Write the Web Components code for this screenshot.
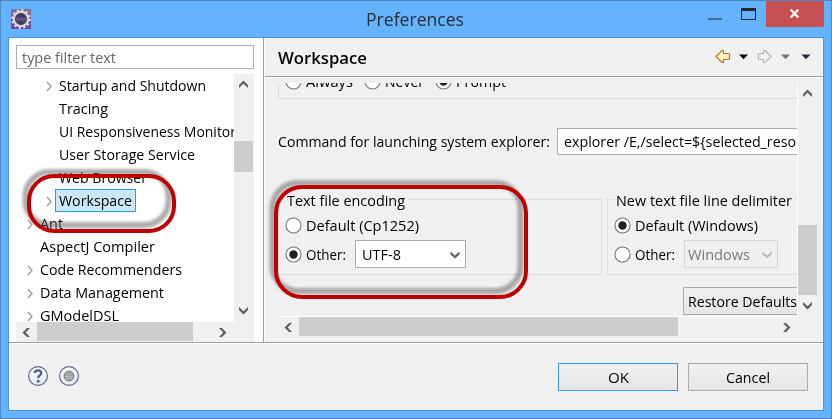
<!DOCTYPE html>
<html lang="en">
<head>
<meta charset="utf-8">
<title>Preferences</title>
<style>
  html, body { margin: 0; height: 100%; overflow: hidden; }
  body { font: 15px/20px "Open Sans", "Noto Sans", sans-serif; color: #000; }
</style>
</head>
<body>
<prefs-window></prefs-window>
<script>
const define = (name, html, setup) => {
  const t = document.createElement('template');
  t.innerHTML = html;
  customElements.define(name, class extends HTMLElement {
    constructor() {
      super();
      this.attachShadow({ mode: 'open' }).append(t.content.cloneNode(true));
    }
    connectedCallback() { if (setup) setup(this, this.shadowRoot); }
  });
};

/* One line of text, condensed or widened to the width in its "w" attribute. */
define('fit-text', `
  <style>
    :host { display: inline-block; white-space: nowrap; flex: none; }
    span { display: inline-block; transform-origin: 0 50%; }
  </style><span><slot></slot></span>`, (el, root) => {
  const s = root.querySelector('span');
  const w = +el.getAttribute('w');
  const natural = s.getBoundingClientRect().width;
  el.style.width = w + 'px';
  if (natural) s.style.transform = `scaleX(${w / natural})`;
});

/* Scroll bar: "dir" v or h, --before and --thumb give the thumb's place. */
define('scroll-bar', `
  <style>
    :host { display: flex; background: #f0f0f0; box-sizing: border-box; }
    :host([dir=v]) { flex-direction: column; width: 20px; }
    :host([dir=h]) { height: 20px; }
    svg { flex: none; width: 20px; height: 20px; fill: #606060; }
    i { background: #cdcdcd; margin-right: 1px; margin-top: var(--before); height: var(--thumb); }
    :host([dir=h]) i { margin: 0 0 1px var(--before); width: var(--thumb); height: auto; }
    b { flex: 1; }
    :host([dir=h]) .a { transform: rotate(-90deg); }
    :host([dir=v]) .z { transform: rotate(180deg); }
    :host([dir=h]) .z { transform: rotate(90deg); }
  </style>
  <svg class="a" viewBox="0 0 20 20"><path d="M9.500 6.500L14 11V14L9.500 9.700L5 14V11Z"/></svg>
  <i></i><b></b>
  <svg class="z" viewBox="0 0 20 20"><path d="M10.500 6.500L15 11V14L10.500 9.700L6 14V11Z"/></svg>`);

define('tree-item', `
  <style>
    :host { display: flex; align-items: center; height: 23px; padding-left: 8px; }
    :host([level="2"]) { padding-left: 27px; }
    svg { width: 12px; height: 12px; flex: none; visibility: hidden; fill: none; stroke: #9a9a9a; stroke-width: 1.3; }
    :host([branch]) svg { visibility: visible; }
    div { box-sizing: border-box; height: 23px; border: 1px solid transparent; padding: 0 3px 0 3px; line-height: 20px; }
    :host([selected]) div { background: #cbe8f6; border-color: #26a0da; }
  </style>
  <svg viewBox="0 0 12 12"><path d="M4 2L8 6.500L4 11"/></svg>
  <div><slot></slot></div>`);

define('radio-option', `
  <style>
    :host { display: flex; align-items: center; gap: 4px; height: 20px; }
    svg { width: 17px; height: 17px; flex: none; }
    circle { fill: #fff; stroke: #767676; stroke-width: 1.1; }
    .dot { fill: none; stroke: none; }
    :host([checked]) .dot { fill: #212121; }
  </style>
  <svg viewBox="0 0 17 17"><circle cx="8.500" cy="8.500" r="7.500"/><circle class="dot" cx="8.500" cy="8.500" r="4.200"/></svg>
  <slot></slot>`);

define('combo-box', `
  <style>
    :host { display: flex; box-sizing: border-box; height: 28px; border: 1px solid #abadb3; background: #fff; align-items: center; justify-content: space-between; padding: 0 5px 1px 6px; }
    :host([disabled]) { border-color: #d4d4d4; background: #efefef; color: #787878; padding-left: 3px; }
    svg { width: 10px; height: 10px; fill: #606060; margin-top: 2px; }
    :host([disabled]) svg { fill: #bcbcbc; }
  </style>
  <slot></slot><svg viewBox="0 0 10 10"><path d="M.500 1.500L5 5.500L9.500 1.500V4.500L5 8.500L.500 4.500Z"/></svg>`);

define('group-box', `
  <style>
    :host { display: block; box-sizing: border-box; height: 76px; border: 1px solid #dcdcdc; }
    header { width: max-content; height: 20px; margin: -10px 0 0 6px; background: #f0f0f0; padding: 0 3px 0 2px; }
    section { padding-left: 6px; display: grid; grid-template-rows: 20px 28px; row-gap: 5px; padding-top: 5px; }
  </style>
  <header><slot name="legend"></slot></header><section><slot></slot></section>`);

define('option-row', `
  <style>:host { display: flex; align-items: center; gap: 9px; }</style><slot></slot>`);

define('push-button', `
  <style>
    :host { display: flex; align-items: center; justify-content: center; box-sizing: border-box; width: 120px; height: 28px; flex: none;
      border: 1px solid #acacac; background: linear-gradient(#f0f0f0, #e5e5e5); }
    :host([primary]) { border-color: #3399ff; }
  </style><slot></slot>`);

/* Red marker outline with a soft grey shadow to its upper left. */
define('marker-ring', `
  <style>
    :host { position: absolute; box-sizing: border-box; pointer-events: none; border-radius: 27px; }
    i, b { position: absolute; inset: 0; border-radius: inherit; box-sizing: border-box; }
    i { border: 6px solid rgba(95,95,95,.52); transform: translate(-4.500px, -5px); filter: blur(1.500px); }
    b { border: 4.500px solid #c00000; }
  </style><i></i><b></b>`);

define('title-bar', `
  <style>
    :host { display: flex; height: 36px; position: relative; }
    .app { width: 20px; height: 20px; margin: 8px 0 0 10px; }
    .name { flex: 1; color: #2b2f36; font-size: 18px; line-height: 24px; padding: 6px 0 0 335px; }
    .btns { height: 30px; width: 141px; }
  </style>
  <svg class="app" viewBox="0 0 20 20">
    <defs><linearGradient id="g" x2="0" y2="1"><stop stop-color="#8a7193"/><stop offset="1" stop-color="#64489b"/></linearGradient>
    <linearGradient id="h" x2="0" y2="1"><stop stop-color="#332b44"/><stop offset=".5" stop-color="#51497c"/><stop offset=".6" stop-color="#4b4468"/><stop offset="1" stop-color="#39314d"/></linearGradient></defs>
    <rect width="20" height="20" fill="url(#g)"/>
    <circle cx="10" cy="10" r="8.700" fill="none" stroke="#e5e0db" stroke-width="2.200" stroke-dasharray="2.300 2.255"/>
    <circle cx="10" cy="10" r="7.200" fill="url(#h)" stroke="#dcd7d3" stroke-width="2.200"/>
    <path d="M5 9.500H15M5 11H15" stroke="#766e97" stroke-width=".6"/>
  </svg>
  <div class="name"><fit-text w="98">Preferences</fit-text></div>
  <svg class="btns" viewBox="0 0 141 30">
    <rect x="18" y="17" width="14" height="2" fill="#496d91"/>
    <rect x="51.500" y="7.500" width="14" height="11" fill="none" stroke="#25272b"/><rect x="51" y="7" width="15" height="3" fill="#25272b"/>
    <rect x="76" y="0" width="58" height="26" fill="#c75050"/>
    <path d="M100.700 8.500L108.300 16.500M108.300 8.500L100.700 16.500" stroke="#fff" stroke-width="2.300"/>
  </svg>`);

define('filter-tree', `
  <style>
    :host { display: flex; flex-direction: column; background: #fff; width: 255px; box-sizing: border-box; padding: 7px 9px 0 7px; border-right: 1px solid #a0a0a0; height: 304px; }
    .filter { box-sizing: border-box; width: 238px; height: 24px; border: 1px solid #abadb3; color: #666; padding: 1px 5px; flex: none; }
    .grid { display: grid; grid-template: 248px 20px / 218px 20px; margin-top: 5px; }
    .rows { overflow: hidden; }
    .v { --before: 47px; --thumb: 31px; padding-bottom: 1px; }
    .h { --before: 1px; --thumb: 156px; padding-right: 1px; }
    .corner { background: #f0f0f0; }
  </style>
  <div class="filter"><fit-text w="94">type filter text</fit-text></div>
  <div class="grid">
    <div class="rows">
      <tree-item level="2" branch><fit-text w="147">Startup and Shutdown</fit-text></tree-item>
      <tree-item level="2"><fit-text w="49">Tracing</fit-text></tree-item>
      <tree-item level="2"><fit-text w="177">UI Responsiveness Monitor</fit-text></tree-item>
      <tree-item level="2"><fit-text w="136">User Storage Service</fit-text></tree-item>
      <tree-item level="2"><fit-text w="88">Web Browser</fit-text></tree-item>
      <tree-item level="2" branch selected><fit-text w="73">Workspace</fit-text></tree-item>
      <tree-item branch><fit-text w="23">Ant</fit-text></tree-item>
      <tree-item><fit-text w="115">AspectJ Compiler</fit-text></tree-item>
      <tree-item branch><fit-text w="142">Code Recommenders</fit-text></tree-item>
      <tree-item branch><fit-text w="124">Data Management</fit-text></tree-item>
      <tree-item branch><fit-text w="79">GModelDSL</fit-text></tree-item>
    </div>
    <scroll-bar dir="v" class="v"></scroll-bar>
    <scroll-bar dir="h" class="h"></scroll-bar>
    <div class="corner"></div>
  </div>`);

define('page-header', `
  <style>
    :host { display: flex; box-sizing: border-box; height: 39px; border-bottom: 1px solid #a0a0a0; box-shadow: 0 1px #fff; padding: 10px 11px 0 13px; justify-content: space-between; }
    .t { font-weight: 600; font-size: 16px; }
    svg { width: 98px; height: 20px; }
  </style>
  <div class="t"><fit-text w="89">Workspace</fit-text></div>
  <svg viewBox="0 0 98 20">
    <defs><linearGradient id="y" x2="0" y2="1"><stop stop-color="#fffdf0"/><stop offset="1" stop-color="#ffe394"/></linearGradient></defs>
    <path d="M2 8.500L8 2.500H9.500V5.500H14.500Q15.500 5.500 15.500 6.500V10.500Q15.500 11.500 14.500 11.500H9.500V14.500H8L2 8.500Z" fill="url(#y)" stroke="#b7791c" stroke-width="1.200"/>
    <path d="M25 6.500H34L29.500 11.300Z"/>
    <path d="M57 8.500L51 2.500H49.500V5.500H45Q44.500 5.500 44.500 6.500V10.500Q44.500 11.500 45 11.500H49.500V14.500H51L57 8.500Z" fill="#f3f3f3" stroke="#b3b3b3" stroke-width="1.200"/>
    <path d="M67 6.500H76L71.500 11.300Z" fill="#77777b"/>
    <path d="M87.500 6.500H96.500L92 11.300Z" fill="#2e2344"/>
  </svg>`);

define('page-form', `
  <style>
    :host { display: grid; grid-template: 233px 20px / 520px 20px; padding: 6px 0 0 13px; }
    .view { overflow: hidden; box-sizing: border-box; border-right: 1px solid #fff; border-bottom: 1px solid #fff; height: 234px; width: 520px; }
    .inner { width: 640px; }
    .prompt { height: 16px; box-sizing: border-box; border: solid #dcdcdc; border-width: 0 0 1px 1px; display: flex; align-items: flex-end; padding: 0 0 7px 6px; overflow: visible; }
    .prompt radio-option { margin-right: 11px; }
    .cmd { display: flex; align-items: center; margin-top: 30px; gap: 7px; height: 27px; }
    .cmd > fit-text { margin-top: -1px; }
    .input { width: 320px; height: 27px; box-sizing: border-box; border: 1px solid #abadb3; background: #fff; padding: 2px 6px; }
    .groups { display: flex; gap: 5px; margin-top: 44px; }
    .l { width: 324px; } .r { width: 260px; }
    .one { width: 111px; } .two { width: 94px; }
    .restore { display: flex; margin: 12px 0 0 405px; }
    .restore push-button { width: 125px; justify-content: flex-start; box-sizing: border-box; padding-left: 4px; }
    .prompt + .cmd { margin-top: 29px; }
    .v { --before: 122px; --thumb: 70px; width: 20px; height: 233px; }
    .h { --before: 1px; --thumb: 379px; margin: 1px 1px 0 0; }
  </style>
  <div class="view"><div class="inner">
    <div class="prompt">
      <radio-option><fit-text w="47">Always</fit-text></radio-option>
      <radio-option><fit-text w="39">Never</fit-text></radio-option>
      <radio-option checked><fit-text w="50">Prompt</fit-text></radio-option>
    </div>
    <div class="cmd"><fit-text w="272">Command for launching system explorer:</fit-text><div class="input"><fit-text w="232">explorer /E,/select=\${selected_reso</fit-text></div></div>
    <div class="groups">
      <group-box class="l">
        <fit-text slot="legend" w="118">Text file encoding</fit-text>
        <radio-option><fit-text w="113">Default (Cp1252)</fit-text></radio-option>
        <option-row><radio-option checked><fit-text w="40">Other:</fit-text></radio-option><combo-box class="one"><fit-text w="39">UTF-8</fit-text></combo-box></option-row>
      </group-box>
      <group-box class="r">
        <fit-text slot="legend" w="176">New text file line delimiter</fit-text>
        <radio-option checked><fit-text w="123">Default (Windows)</fit-text></radio-option>
        <option-row><radio-option><fit-text w="40">Other:</fit-text></radio-option><combo-box disabled class="two"><fit-text w="62">Windows</fit-text></combo-box></option-row>
      </group-box>
    </div>
    <div class="restore"><push-button><fit-text w="109">Restore Defaults</fit-text></push-button></div>
  </div></div>
  <scroll-bar dir="v" class="v"></scroll-bar>
  <scroll-bar dir="h" class="h"></scroll-bar>`);

define('button-bar', `
  <style>
    :host { display: flex; box-sizing: border-box; height: 68px; border-top: 1px solid #a0a0a0; box-shadow: inset 0 1px #fff; padding: 20px 15px 0 18px; gap: 10px; }
    svg { width: 54px; height: 24px; margin: 1px auto 0 0; }
  </style>
  <svg viewBox="0 0 54 24">
    <defs><linearGradient id="b" x2="0" y2="1"><stop stop-color="#fff"/><stop offset="1" stop-color="#e3e8f0"/></linearGradient></defs>
    <circle cx="11" cy="12" r="9.400" fill="url(#b)" stroke="#596b8f" stroke-width="1.200"/>
    <path d="M7.700 9Q7.700 6.300 11 6.300Q14.300 6.300 14.300 9Q14.300 10.400 12.700 11.500Q11.200 12.500 11.200 14.300" fill="none" stroke="#4d608a" stroke-width="2.200"/><rect x="9.900" y="16" width="2.600" height="2.500" fill="#4d608a"/>
    <circle cx="42" cy="12" r="9.400" fill="url(#b)" stroke="#596b8f" stroke-width="1.200"/>
    <circle cx="42" cy="12" r="4.900" fill="#a2a2a2" stroke="#757575" stroke-width="1"/>
    <path d="M38.500 10H45.500M38 12.500H46M39 14.500H45" stroke="#bdbdbd" stroke-width=".7"/>
  </svg>
  <push-button primary><fit-text w="21">OK</fit-text></push-button>
  <push-button><fit-text w="44">Cancel</fit-text></push-button>`);

define('prefs-window', `
  <style>
    :host { display: block; position: relative; box-sizing: border-box; width: 832px; height: 419px; background: #64b3ff; border: 1px solid #4d8ac6; overflow: hidden; }
    .client { box-sizing: border-box; width: 816px; height: 374px; margin-left: 7px; border: 1px solid #4f96d9; background: #f0f0f0; }
    .main { display: grid; grid-template-columns: 256px 1fr; height: 304px; }
    .left { border-right: 1px solid #fff; }
    .ring1 { left: 25.500px; top: 172.500px; width: 149px; height: 59px; }
    .ring2 { left: 273px; top: 183.500px; width: 254px; height: 114px; border-radius: 28px; }
  </style>
  <title-bar></title-bar>
  <div class="client">
    <div class="main">
      <div class="left"><filter-tree></filter-tree></div>
      <div><page-header></page-header><page-form></page-form></div>
    </div>
    <button-bar></button-bar>
  </div>
  <marker-ring class="ring1"></marker-ring>
  <marker-ring class="ring2"></marker-ring>`);
</script>
</body>
</html>
